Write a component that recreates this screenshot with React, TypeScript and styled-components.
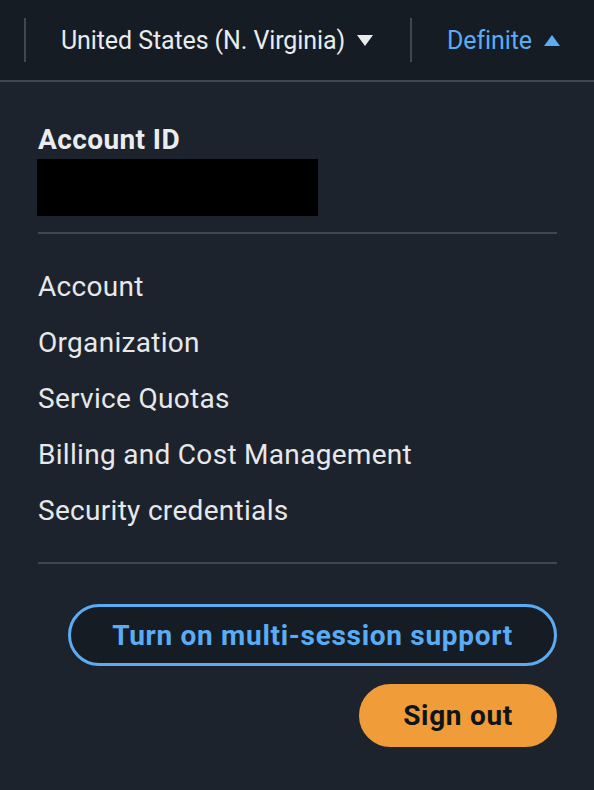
import React from "react";
import styled, { createGlobalStyle } from "styled-components";

const Global = createGlobalStyle`
  html, body { margin: 0; padding: 0; background: #1d232d; }
  body { font-family: Roboto, "Noto Sans", sans-serif; -webkit-font-smoothing: antialiased; }
  * { box-sizing: border-box; }
`;

const Page = styled.div`
  width: 594px;
  height: 790px;
  background: #1d232d;
  display: flex;
  flex-direction: column;
  overflow: hidden;
`;

const TopBar = styled.div`
  height: 82px;
  flex: none;
  background: #161c24;
  border-bottom: 2px solid #414750;
  display: flex;
  align-items: center;
  padding-left: 24px;
`;

const Separator = styled.div`
  width: 2px;
  height: 44px;
  background: #414750;
  flex: none;
`;

const BarItem = styled.div<{ $blue?: boolean }>`
  display: flex;
  align-items: center;
  gap: 12px;
  margin: 1px 37px 0 35px;
  font-size: 25px;
  letter-spacing: -0.1px;
  color: ${(p) => (p.$blue ? "#5aacf4" : "#e9ebed")};
  white-space: nowrap;
`;

const Caret = styled.svg`
  width: 16px;
  height: 11px;
  flex: none;
`;

const Panel = styled.div`
  padding: 40px 37px 0 38px;
  display: flex;
  flex-direction: column;
`;

const Label = styled.div`
  font-size: 28px;
  line-height: 36px;
  font-weight: 700;
  letter-spacing: 0.4px;
  color: #eaedf0;
`;

const Redacted = styled.div`
  width: 281px;
  height: 57px;
  background: #000;
  margin: 1px 0 0 -1px;
`;

const Divider = styled.hr<{ $top: number }>`
  border: none;
  height: 2px;
  background: #414750;
  margin: ${(p) => p.$top}px 0 0;
`;

const Menu = styled.ul`
  list-style: none;
  margin: 25px 0 0;
  padding: 0;
`;

const MenuItem = styled.li`
  font-size: 28px;
  line-height: 56px;
  letter-spacing: 0.3px;
  color: #e6e8ea;
`;

const Actions = styled.div`
  display: flex;
  flex-direction: column;
  align-items: flex-end;
  gap: 18px;
  margin-top: 40px;
`;

const Button = styled.button<{ $primary?: boolean }>`
  font-family: inherit;
  font-size: 28px;
  font-weight: 700;
  letter-spacing: 0.7px;
  height: ${(p) => (p.$primary ? "63px" : "62px")};
  border-radius: 32px;
  padding: 0 41px;
  border: 3px solid ${(p) => (p.$primary ? "#f09c38" : "#5aacf4")};
  background: ${(p) => (p.$primary ? "#f09c38" : "#161c24")};
  color: ${(p) => (p.$primary ? "#0f141a" : "#5aacf4")};
  white-space: nowrap;
`;

export default function App() {
  return (
    <Page>
      <Global />
      <TopBar>
        <Separator />
        <BarItem>
          United States (N. Virginia)
          <Caret viewBox="0 0 16 11">
            <path d="M0 0h16L8 11z" fill="#e9ebed" />
          </Caret>
        </BarItem>
        <Separator />
        <BarItem $blue>
          Definite
          <Caret viewBox="0 0 16 11">
            <path d="M0 11h16L8 0z" fill="#5aacf4" />
          </Caret>
        </BarItem>
      </TopBar>
      <Panel>
        <Label>Account ID</Label>
        <Redacted />
        <Divider $top={16} />
        <Menu>
          <MenuItem>Account</MenuItem>
          <MenuItem>Organization</MenuItem>
          <MenuItem>Service Quotas</MenuItem>
          <MenuItem>Billing and Cost Management</MenuItem>
          <MenuItem>Security credentials</MenuItem>
        </Menu>
        <Divider $top={23} />
        <Actions>
          <Button>Turn on multi-session support</Button>
          <Button $primary>Sign out</Button>
        </Actions>
      </Panel>
    </Page>
  );
}
